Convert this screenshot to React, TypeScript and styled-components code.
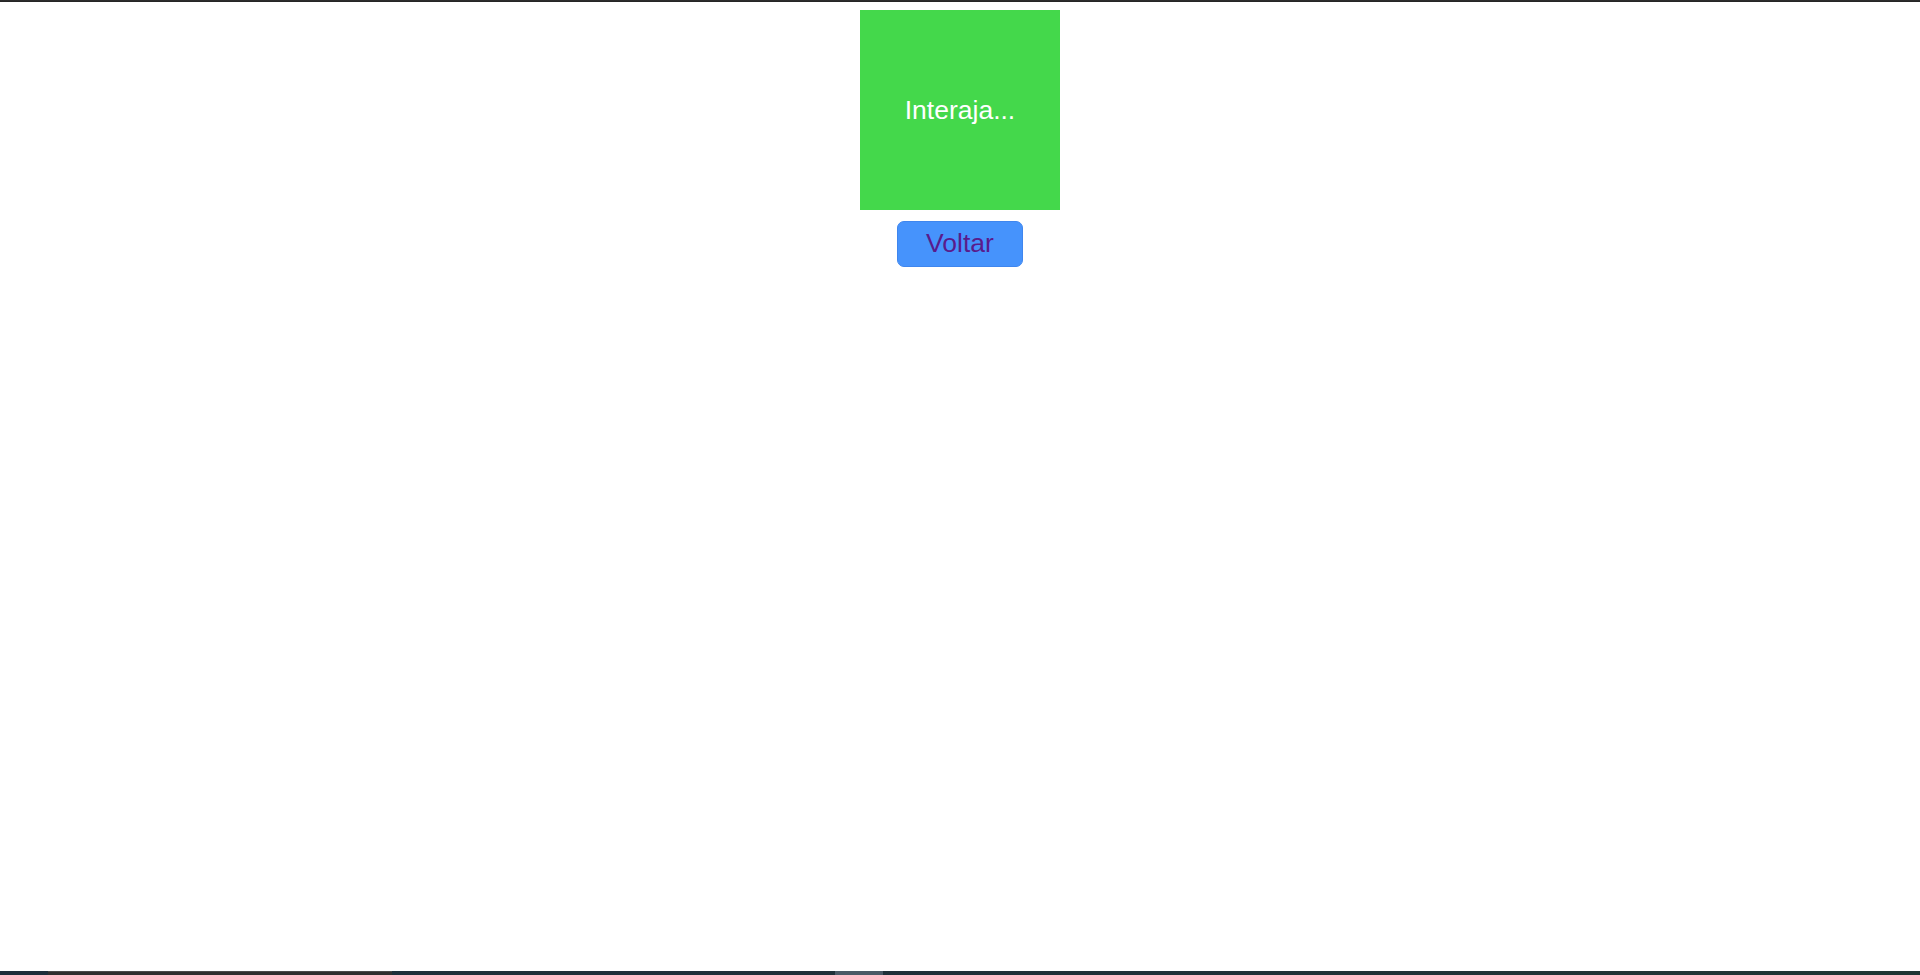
import React from "react";
import styled, { createGlobalStyle } from "styled-components";

const GlobalStyle = createGlobalStyle`
  html, body {
    margin: 0;
    padding: 0;
    background: #ffffff;
    font-family: "Liberation Sans", Arial, sans-serif;
  }
  #root {
    min-height: 100vh;
  }
`;

const Page = styled.div`
  display: flex;
  flex-direction: column;
  min-height: 100vh;
  width: 100%;
`;

const TopStrip = styled.div`
  height: 2px;
  flex: none;
  background: linear-gradient(to bottom, #303030, #222222);
`;

const Main = styled.main`
  flex: 1;
  display: flex;
  flex-direction: column;
  align-items: center;
  gap: 11px;
  padding-top: 8px;
`;

const Square = styled.div`
  width: 200px;
  height: 200px;
  background: #44d84b;
  color: #ffffff;
  display: flex;
  align-items: center;
  justify-content: center;
  font-size: 26.5px;
  font-family: "Liberation Sans", Arial, sans-serif;
`;

const BackButton = styled.button`
  width: 126px;
  height: 46px;
  box-sizing: border-box;
  border: 1px solid #3f86ee;
  border-radius: 7px;
  background: #4693fc;
  color: #5a1b8c;
  font-size: 26.5px;
  font-family: "Liberation Sans", Arial, sans-serif;
  display: flex;
  align-items: center;
  justify-content: center;
  padding: 0 0 2px 0;
  cursor: pointer;
`;

const BottomStrip = styled.div`
  height: 4px;
  flex: none;
  display: flex;
  background: linear-gradient(to right, #1e2e3b, #1f3038 60%, #203634);
`;

const Segment = styled.div<{ $w: number; $bg: string; $edge?: string }>`
  width: ${(p) => p.$w}px;
  flex: none;
  background: ${(p) => p.$bg};
  border-top: ${(p) => (p.$edge ? `1px solid ${p.$edge}` : "none")};
  box-sizing: border-box;
`;

const Filler = styled.div`
  flex: 1;
`;

export default function App() {
  return (
    <>
      <GlobalStyle />
      <Page>
        <TopStrip />
        <Main>
          <Square>Interaja...</Square>
          <BackButton>Voltar</BackButton>
        </Main>
        <BottomStrip>
          <Segment $w={48} $bg="transparent" />
          <Segment $w={344} $bg="#2f2f2f" $edge="#4a4a4a" />
          <Segment $w={443} $bg="transparent" />
          <Segment $w={48} $bg="#4a5966" />
          <Filler />
        </BottomStrip>
      </Page>
    </>
  );
}
